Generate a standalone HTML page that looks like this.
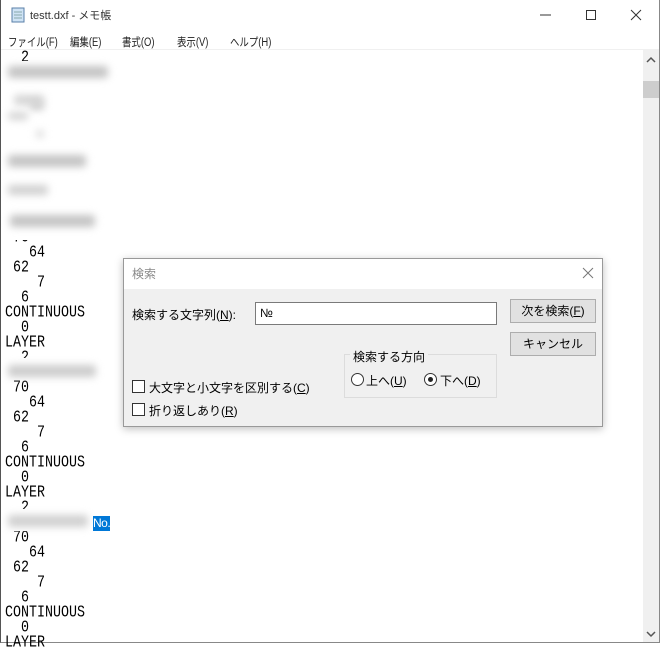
<!DOCTYPE html>
<html><head><meta charset="utf-8"><style>
*{margin:0;padding:0;box-sizing:border-box}
body{width:660px;height:643px;overflow:hidden;background:#fff;position:relative;font-family:"Liberation Sans","Noto Sans CJK JP",sans-serif;}
.win{position:absolute;left:0;top:0;width:660px;height:643px;border-left:1px solid #555;border-right:1px solid #888;border-bottom:1px solid #888;}
.title{position:absolute;left:30px;top:7px;font-size:11px;color:#333}
.m{position:absolute;top:34px;font-size:11.5px;color:#222;white-space:nowrap;transform:scaleX(0.82);transform-origin:0 0}
.sep{position:absolute;left:1px;top:49px;width:658px;height:1px;background:#f0f0f0}
.l{position:absolute;left:5px;height:15px;font-family:"Liberation Mono",monospace;font-size:13.33px;line-height:15px;white-space:pre;color:#000}
.l span{display:inline-block;transform:scaleY(1.25)}
.blur{position:absolute;filter:blur(4px);background:#c4c4c4;border-radius:3px}
.sb{position:absolute;left:643px;top:50px;width:16px;height:592px;background:#f0f0f0}
.thumb{position:absolute;left:643px;top:81px;width:16px;height:17px;background:#cdcdcd}
.dlg{position:absolute;left:123px;top:258px;width:480px;height:169px;background:#f0f0f0;border:1px solid #999;box-shadow:0 2px 8px rgba(0,0,0,.25)}
.dt{position:absolute;left:0;top:0;width:478px;height:30px;background:#fff;font-size:12px;color:#888;padding:6px 0 0 8px}
.lbl{position:absolute;font-size:12px;color:#000;white-space:nowrap}
.inp{position:absolute;left:131px;top:43px;width:242px;height:23px;background:#fff;border:1px solid #7a7a7a;font-size:12px;padding:3px 0 0 4px}
.btn{position:absolute;left:386px;width:86px;height:24px;background:#e1e1e1;border:1px solid #adadad;font-size:12px;text-align:center;line-height:22px}
.grp{position:absolute;left:220px;top:95px;width:153px;height:44px;border:1px solid #dcdcdc}
.cb{position:absolute;width:13px;height:13px;border:1px solid #333;background:#fff}
.rb{position:absolute;width:13px;height:13px;border:1px solid #333;border-radius:50%;background:#fff}
u{text-decoration:underline}
</style></head><body>
<div class="win"></div>
<svg style="position:absolute;left:10px;top:6px" width="16" height="17"><rect x="2" y="2" width="12" height="14" fill="#cfe3f5" stroke="#5a7fa8"/><path d="M4 6h8M4 9h8M4 12h8" stroke="#8aa" /></svg>
<div class="title">testt.dxf - メモ帳</div>
<svg style="position:absolute;left:535px;top:9px" width="110" height="14"><path d="M5 6h11" stroke="#333"/><rect x="51.5" y="1.5" width="9" height="9" fill="none" stroke="#333"/><path d="M96 1l10 10M106 1l-10 10" stroke="#333"/></svg>
<div class="m" style="left:8px">ファイル(F)</div>
<div class="m" style="left:70px">編集(E)</div>
<div class="m" style="left:122px">書式(O)</div>
<div class="m" style="left:177px">表示(V)</div>
<div class="m" style="left:230px">ヘルプ(H)</div>
<div class="sep"></div>

<div class="l" style="top:51px"><span>  2</span></div>
<div class="l" style="top:231px"><span> 70</span></div>
<div class="l" style="top:246px"><span>   64</span></div>
<div class="l" style="top:261px"><span> 62</span></div>
<div class="l" style="top:276px"><span>    7</span></div>
<div class="l" style="top:291px"><span>  6</span></div>
<div class="l" style="top:306px"><span>CONTINUOUS</span></div>
<div class="l" style="top:321px"><span>  0</span></div>
<div class="l" style="top:336px"><span>LAYER</span></div>
<div class="l" style="top:351px"><span>  2</span></div>
<div class="l" style="top:381px"><span> 70</span></div>
<div class="l" style="top:396px"><span>   64</span></div>
<div class="l" style="top:411px"><span> 62</span></div>
<div class="l" style="top:426px"><span>    7</span></div>
<div class="l" style="top:441px"><span>  6</span></div>
<div class="l" style="top:456px"><span>CONTINUOUS</span></div>
<div class="l" style="top:471px"><span>  0</span></div>
<div class="l" style="top:486px"><span>LAYER</span></div>
<div class="l" style="top:501px"><span>  2</span></div>
<div class="l" style="top:531px"><span> 70</span></div>
<div class="l" style="top:546px"><span>   64</span></div>
<div class="l" style="top:561px"><span> 62</span></div>
<div class="l" style="top:576px"><span>    7</span></div>
<div class="l" style="top:591px"><span>  6</span></div>
<div class="l" style="top:606px"><span>CONTINUOUS</span></div>
<div class="l" style="top:621px"><span>  0</span></div>
<div class="l" style="top:636px"><span>LAYER</span></div>

<div style="position:absolute;left:4px;top:61px;width:108px;height:179px;background:#fff"></div>
<div style="position:absolute;left:4px;top:358px;width:92px;height:22px;background:#fff"></div>
<div style="position:absolute;left:4px;top:509px;width:88px;height:22px;background:#fff"></div>
<div class="blur" style="left:8px;top:66px;width:100px;height:12px"></div>
<div class="blur" style="left:14px;top:95px;width:30px;height:10px;background:#d4d4d4"></div>
<div class="blur" style="left:30px;top:102px;width:14px;height:8px;background:#ccc"></div>
<div class="blur" style="left:8px;top:112px;width:20px;height:8px;background:#d4d4d4"></div>
<div class="blur" style="left:36px;top:130px;width:8px;height:8px;background:#ddd"></div>
<div class="blur" style="left:8px;top:155px;width:78px;height:12px"></div>
<div class="blur" style="left:8px;top:185px;width:40px;height:10px;background:#d0d0d0"></div>
<div class="blur" style="left:10px;top:215px;width:85px;height:12px"></div>
<div class="blur" style="left:8px;top:365px;width:88px;height:12px;background:#ccc"></div>
<div class="blur" style="left:8px;top:515px;width:80px;height:12px;background:#d0d0d0"></div>
<div style="position:absolute;left:93px;top:516px;width:17px;height:15px;background:#0078d7;color:#fff;font-family:'Liberation Sans Narrow','Liberation Sans',sans-serif;font-size:12px;line-height:15px;letter-spacing:-0.5px">No.</div>
<div class="sb"></div><div class="thumb"></div>
<svg style="position:absolute;left:646px;top:56px" width="10" height="8"><path d="M1 6l4-4 4 4" stroke="#555" fill="none" stroke-width="1.5"/></svg>
<svg style="position:absolute;left:646px;top:630px" width="10" height="8"><path d="M1 2l4 4 4-4" stroke="#555" fill="none" stroke-width="1.5"/></svg>
<div class="dlg">
<div class="dt">検索</div>
<svg style="position:absolute;left:458px;top:8px" width="12" height="12"><path d="M1 1l10 10M11 1l-10 10" stroke="#777"/></svg>
<div class="lbl" style="left:8px;top:47px">検索する文字列(<u>N</u>):</div>
<div class="inp">№</div>
<div class="btn" style="top:40px">次を検索(<u>F</u>)</div>
<div class="btn" style="top:73px">キャンセル</div>
<div class="grp"></div>
<div class="lbl" style="left:226px;top:89px;background:#f0f0f0;padding:0 3px">検索する方向</div>
<div class="rb" style="left:227px;top:114px"></div><div class="lbl" style="left:242px;top:113px">上へ(<u>U</u>)</div>
<div class="rb" style="left:300px;top:114px"></div><div style="position:absolute;left:304px;top:118px;width:5px;height:5px;border-radius:50%;background:#222"></div><div class="lbl" style="left:316px;top:113px">下へ(<u>D</u>)</div>
<div class="cb" style="left:8px;top:121px"></div><div class="lbl" style="left:25px;top:120px">大文字と小文字を区別する(<u>C</u>)</div>
<div class="cb" style="left:8px;top:144px"></div><div class="lbl" style="left:25px;top:143px">折り返しあり(<u>R</u>)</div>
</div>
</body></html>
